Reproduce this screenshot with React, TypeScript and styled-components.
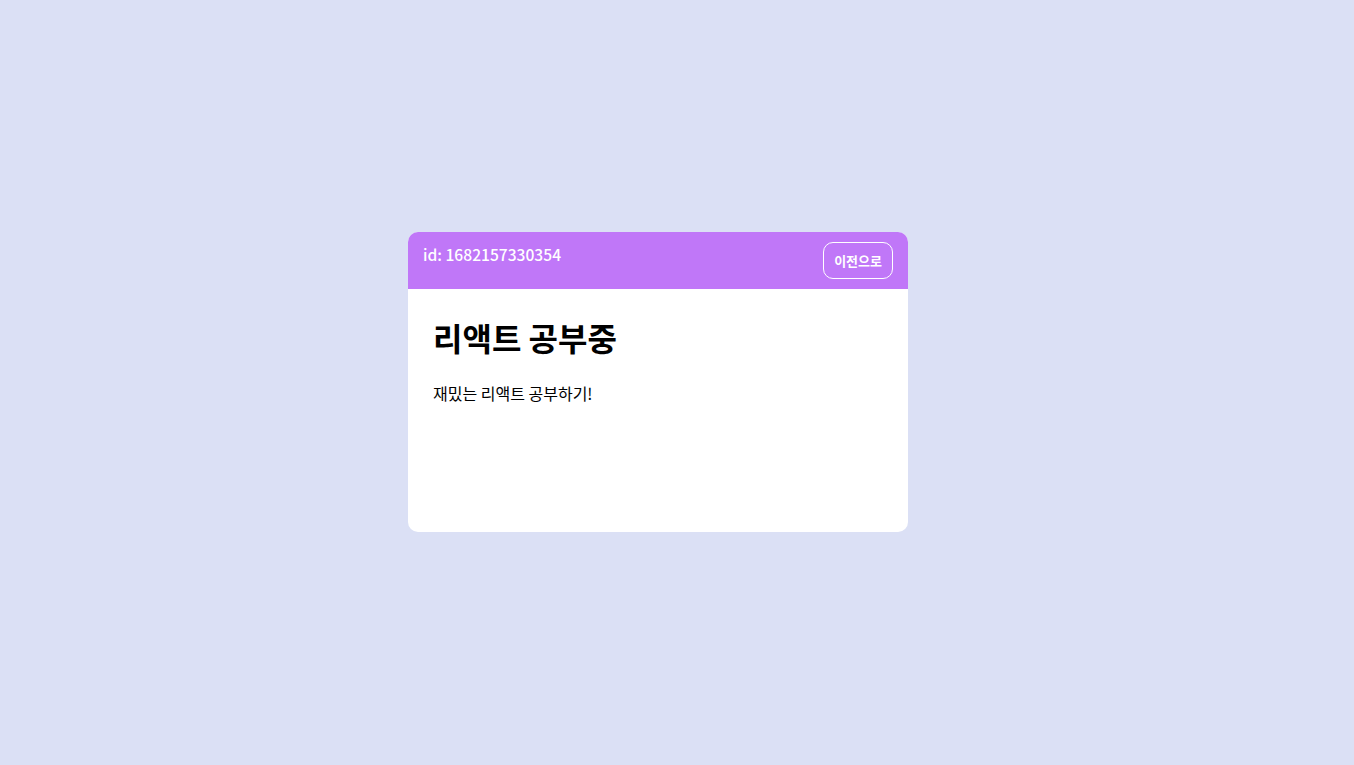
import styled, { createGlobalStyle } from 'styled-components';

const GlobalStyle = createGlobalStyle`
  html, body {
    margin: 0;
    padding: 0;
    background: #dbe0f5;
    font-family: "Noto Sans CJK KR", "Noto Sans", sans-serif;
  }
`;

const Page = styled.div`
  min-height: 100vh;
  display: flex;
  align-items: center;
  justify-content: center;
  padding: 0 38px 1px 0;
  box-sizing: border-box;
`;

const Card = styled.div`
  width: 500px;
  height: 300px;
  background: #fff;
  border-radius: 10px;
  overflow: hidden;
  display: flex;
  flex-direction: column;
`;

const Header = styled.div`
  display: flex;
  justify-content: space-between;
  align-items: flex-start;
  padding: 10px 15px;
  background: #c077f8;
  color: #fff;
  font-size: 15.6px;
  line-height: 25px;
  font-weight: 500;
`;

const BackButton = styled.button`
  height: 37px;
  padding: 0 10px;
  border: 1px solid #fff;
  border-radius: 10px;
  background: transparent;
  color: #fff;
  font-family: inherit;
  font-size: 13px;
  font-weight: 700;
  cursor: pointer;
`;

const Body = styled.div`
  padding: 25px;
`;

const Title = styled.h1`
  margin: 0;
  font-size: 32px;
  font-weight: 700;
  color: #000;
`;

const Content = styled.p`
  margin: 21px 0 0;
  font-size: 16px;
  color: #000;
`;

const App = (): JSX.Element => {
  return (
    <>
      <GlobalStyle />
      <Page>
        <Card>
          <Header>
            <span>id: 1682157330354</span>
            <BackButton>이전으로</BackButton>
          </Header>
          <Body>
            <Title>리액트 공부중</Title>
            <Content>재밌는 리액트 공부하기!</Content>
          </Body>
        </Card>
      </Page>
    </>
  );
};

export default App;
